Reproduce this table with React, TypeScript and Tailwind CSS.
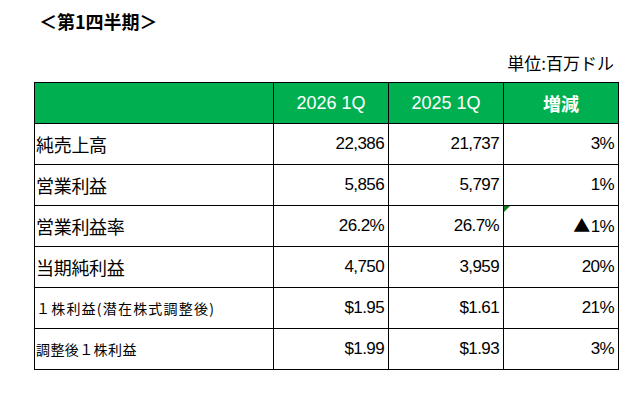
const rows = [
  { label: "純売上高", size: "text-[18px] tracking-[-0.3px]", a: "22,386", b: "21,737", c: "3%" },
  { label: "営業利益", size: "text-[18px] tracking-[-0.3px]", a: "5,856", b: "5,797", c: "1%" },
  { label: "営業利益率", size: "text-[18px] tracking-[-0.3px]", a: "26.2%", b: "26.7%", c: "1%", flag: true },
  { label: "当期純利益", size: "text-[18px] tracking-[-0.3px]", a: "4,750", b: "3,959", c: "20%" },
  { label: "１株利益(潜在株式調整後)", size: "text-[14px] tracking-[1.2px]", a: "$1.95", b: "$1.61", c: "21%" },
  { label: "調整後１株利益", size: "text-[14px] tracking-[0.4px]", a: "$1.99", b: "$1.93", c: "3%" },
];

const jp = "font-['Noto_Sans_CJK_JP','Noto_Sans',sans-serif]";
const num = "font-['Liberation_Sans','Noto_Sans_CJK_JP',sans-serif]";

export default function App() {
  return (
    <div className="w-[633px] h-[411px] bg-white text-black pl-[34px] pt-[9px]">
      <h2 className={`${jp} ml-[5px] text-[18px] font-bold leading-[24px]`}>
        ＜第1四半期＞
      </h2>
      <div className={`${jp} w-[580px] text-right text-[17px] leading-[20px] mt-[20px] mb-[9px]`}>
        単位:百万ドル
      </div>
      <table className="table-fixed border-collapse">
        <colgroup>
          <col className="w-[239px]" />
          <col className="w-[115px]" />
          <col className="w-[115px]" />
          <col className="w-[115px]" />
        </colgroup>
        <thead>
          <tr className="h-[41px] bg-[#00b050] text-white">
            <th className="border border-black p-0" />
            <th className={`${num} border border-black p-0 text-[18px] font-normal`}>2026 1Q</th>
            <th className={`${num} border border-black p-0 text-[18px] font-normal`}>2025 1Q</th>
            <th className={`${jp} border border-black p-0 text-[18px] font-bold`}>増減</th>
          </tr>
        </thead>
        <tbody>
          {rows.map((r) => (
            <tr key={r.label} className="h-[41px]">
              <td className={`${jp} border border-black pl-[1px] py-0 ${r.size}`}>{r.label}</td>
              <td className={`${num} border border-black pr-[4px] py-0 text-right text-[17px] tracking-[-0.6px]`}>
                {r.a}
              </td>
              <td className={`${num} border border-black pr-[4px] py-0 text-right text-[17px] tracking-[-0.6px]`}>
                {r.b}
              </td>
              <td className={`${num} relative border border-black pr-[4px] py-0 text-right text-[17px] tracking-[-0.6px]`}>
                {r.flag && (
                  <span className="absolute left-0 top-0 h-0 w-0 border-t-[6px] border-r-[6px] border-t-[#0f7a1f] border-r-transparent" />
                )}
                {r.flag && <span className={`${jp} text-[17px] mr-[1px]`}>▲</span>}
                {r.c}
              </td>
            </tr>
          ))}
        </tbody>
      </table>
    </div>
  );
}
